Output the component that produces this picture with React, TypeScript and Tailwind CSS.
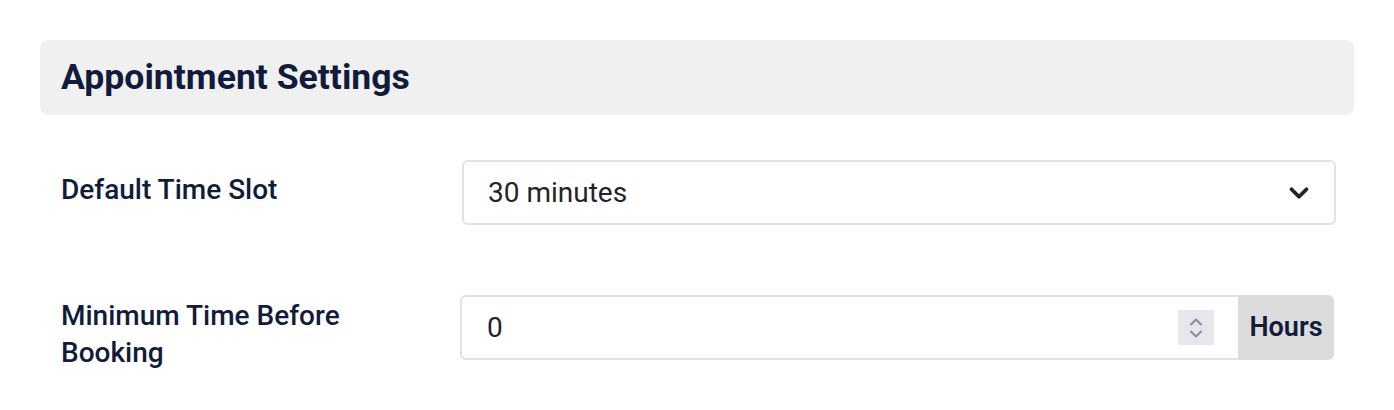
import { ChevronDown, ChevronUp } from "lucide-react";

export default function App() {
  return (
    <div className="w-[1394px] h-[410px] bg-white p-10 font-['Roboto',sans-serif] text-[#111b3b]">
      {/* Header */}
      <div className="h-[75px] rounded-lg bg-[#f0f0f0] px-[21px] flex items-center">
        <h2 className="text-[35.6px] font-bold leading-none">Appointment Settings</h2>
      </div>

      {/* Default time slot */}
      <div className="flex items-start mt-[45px] pr-[18px]">
        <div className="w-[422px] shrink-0 pl-[21px] pt-[11px] text-[28px] font-medium leading-[37px]">
          Default Time Slot
        </div>
        <div className="flex-1 h-[65px] rounded-md border-2 border-[#e2e2e2] bg-white flex items-center justify-between pl-[24px] pr-[20px]">
          <span className="text-[28px] text-[#212529]">30 minutes</span>
          <ChevronDown size={30} strokeWidth={3} className="text-[#222]" />
        </div>
      </div>

      {/* Minimum time before booking */}
      <div className="flex items-start mt-[70px] pr-[20px]">
        <div className="w-[420px] shrink-0 pl-[21px] pt-[2px]">
          <div className="w-[340px] text-[28px] font-medium leading-[37px]">Minimum Time Before Booking</div>
        </div>
        <div className="flex-1 h-[65px] flex">
          <div className="flex-1 rounded-l-md border-2 border-r-0 border-[#e2e2e2] bg-white flex items-center justify-between pl-[25px] pr-[24px]">
            <span className="text-[28px] text-[#212529]">0</span>
            <div className="w-[36px] h-[35px] bg-[#e6e6ec] flex flex-col items-center justify-center text-[#8a8a9a]">
              <ChevronUp size={20} strokeWidth={2.5} className="-mb-[4px]" />
              <ChevronDown size={20} strokeWidth={2.5} className="-mt-[4px]" />
            </div>
          </div>
          <div className="w-[96px] rounded-r-md bg-[#dcdcdc] flex items-center justify-center text-[27px] font-semibold">
            Hours
          </div>
        </div>
      </div>
    </div>
  );
}
